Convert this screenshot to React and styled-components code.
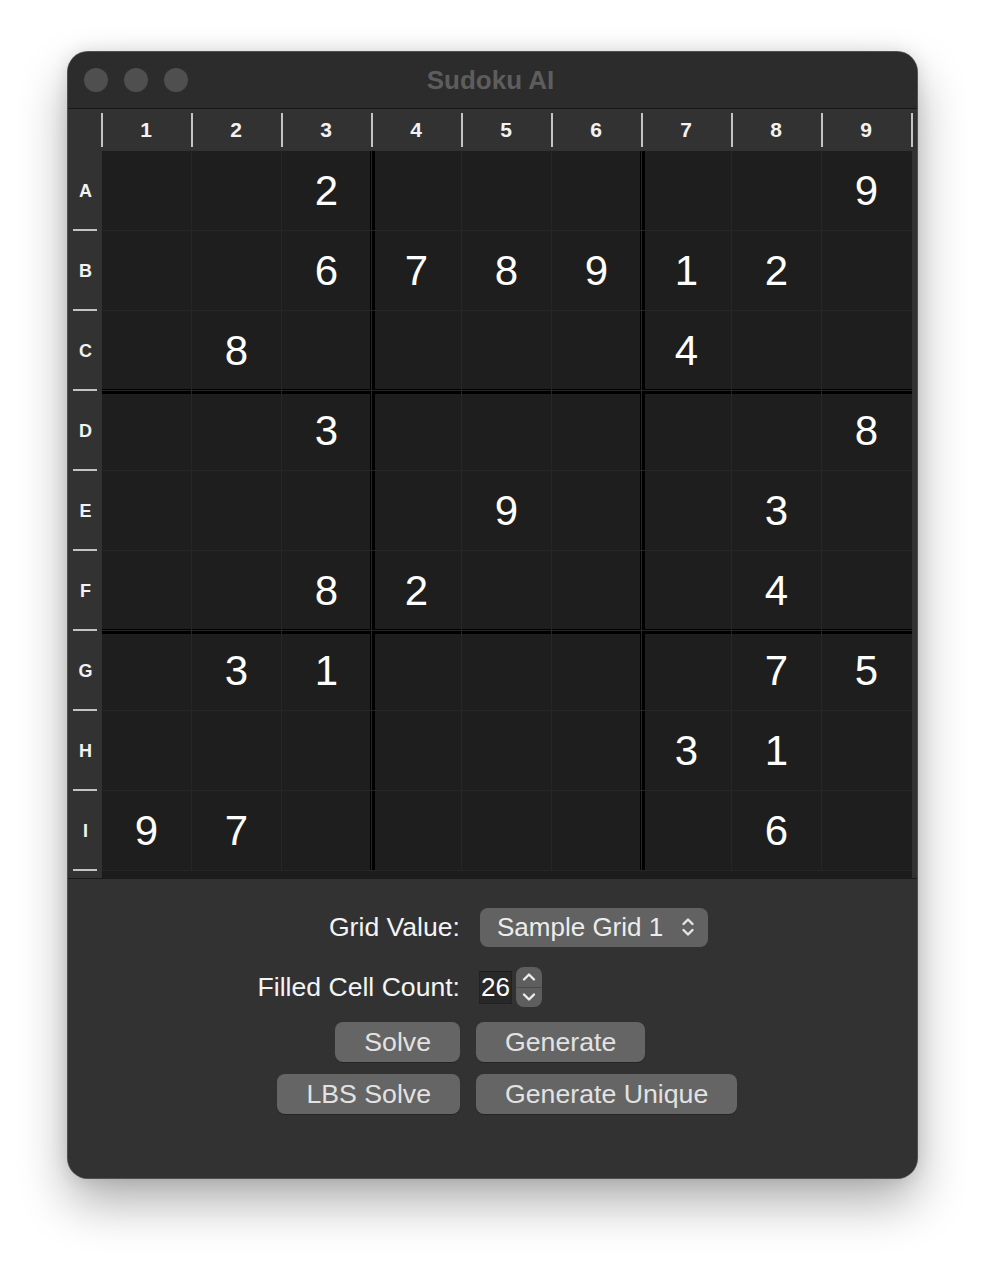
import React from "react";
import styled, { createGlobalStyle } from "styled-components";

const GlobalStyle = createGlobalStyle`
  html, body {
    margin: 0;
    padding: 0;
    background: #ffffff;
  }
  body {
    font-family: "Liberation Sans", Arial, sans-serif;
  }
`;

const FONT = `"Liberation Sans", Arial, sans-serif`;

// rows A..I, 0 = empty
const board = [
  [0, 0, 2, 0, 0, 0, 0, 0, 9],
  [0, 0, 6, 7, 8, 9, 1, 2, 0],
  [0, 8, 0, 0, 0, 0, 4, 0, 0],
  [0, 0, 3, 0, 0, 0, 0, 0, 8],
  [0, 0, 0, 0, 9, 0, 0, 3, 0],
  [0, 0, 8, 2, 0, 0, 0, 4, 0],
  [0, 3, 1, 0, 0, 0, 0, 7, 5],
  [0, 0, 0, 0, 0, 0, 3, 1, 0],
  [9, 7, 0, 0, 0, 0, 0, 6, 0],
];
const rowNames = ["A", "B", "C", "D", "E", "F", "G", "H", "I"];

const Page = styled.div`
  padding: 52px 0 84px 68px;
`;

const Window = styled.div`
  width: 849px;
  height: 1126px;
  border-radius: 20px;
  overflow: hidden;
  background: #323232;
  display: flex;
  flex-direction: column;
  box-shadow: 0 0 0 1px #515151, 0 24px 50px rgba(0, 0, 0, 0.32),
    0 0 18px rgba(0, 0, 0, 0.12);
`;

const TitleBar = styled.div`
  height: 56px;
  flex: none;
  background: #2c2c2c;
  border-bottom: 1px solid #181818;
  display: grid;
  grid-template-columns: 1fr auto 1fr;
  align-items: center;
  padding: 0 16px;
`;

const Lights = styled.div`
  display: flex;
  gap: 16px;
`;

const Light = styled.span`
  width: 24px;
  height: 24px;
  border-radius: 50%;
  background: #4f4f4f;
`;

const Title = styled.div`
  font-family: ${FONT};
  font-weight: 700;
  font-size: 26px;
  color: #5d5d5d;
  margin-left: -4px;
`;

const ColumnHeader = styled.div`
  height: 42px;
  flex: none;
  display: flex;
  padding-left: 33px;
  background: #323232;
`;

const ColLabel = styled.div`
  position: relative;
  width: 90px;
  display: flex;
  align-items: center;
  justify-content: center;
  font-family: ${FONT};
  font-weight: 700;
  font-size: 21px;
  color: #f2f2f2;

  &::before {
    content: "";
    position: absolute;
    left: 0;
    top: 4px;
    width: 2px;
    height: 34px;
    background: #c4c4c4;
  }
  ${(p) =>
    p.$last &&
    `
    &::after {
      content: "";
      position: absolute;
      right: -2px;
      top: 4px;
      width: 2px;
      height: 34px;
      background: #c4c4c4;
    }
  `}
`;

const Board = styled.div`
  flex: none;
  display: flex;
  border-bottom: 1px solid #1a1a1a;
`;

const RowLabels = styled.div`
  width: 34px;
  display: flex;
  flex-direction: column;
  padding-bottom: 7px;
`;

const RowLabel = styled.div`
  position: relative;
  height: 80px;
  display: flex;
  align-items: center;
  justify-content: center;
  font-family: ${FONT};
  font-weight: 700;
  font-size: 18px;
  color: #f2f2f2;
  padding-left: 1px;

  &::after {
    content: "";
    position: absolute;
    left: 5px;
    bottom: 0;
    width: 24px;
    height: 2px;
    background: #c4c4c4;
  }
`;

const GridWrap = styled.div`
  background: #1c1c1c;
  padding-bottom: 7px;
`;

const Grid = styled.div`
  display: grid;
  grid-template-columns: repeat(9, 90px);
  grid-template-rows: repeat(9, 80px);
`;

const cellShadow = ({ $r, $c }) => {
  const s = [];
  if ($c < 8) s.push("inset -1px 0 0 #262626");
  s.push("inset 0 -1px 0 #262626");
  if ($c === 2 || $c === 5) s.push("inset -2px 0 0 #000");
  if ($c === 3 || $c === 6) s.push("inset 3px 0 0 #000");
  if ($r === 2 || $r === 5) s.push("inset 0 -2px 0 #000");
  if ($r === 3 || $r === 6) s.push("inset 0 3px 0 #000");
  return s.join(", ");
};

const Cell = styled.div`
  background: #1e1e1e;
  box-shadow: ${cellShadow};
  display: flex;
  align-items: center;
  justify-content: center;
  font-family: ${FONT};
  font-size: 42px;
  color: #ffffff;
  padding-right: 1px;
`;

const Panel = styled.div`
  flex: 1;
  background: #323232;
  padding-top: 28px;
  display: flex;
  flex-direction: column;
`;

const FormRow = styled.div`
  display: grid;
  grid-template-columns: 392px 1fr;
  column-gap: ${(p) => p.$gap}px;
  align-items: center;
  margin-top: ${(p) => p.$top || 0}px;
  height: 40px;
`;

const Label = styled.div`
  justify-self: end;
  font-family: ${FONT};
  font-size: 26.6px;
  color: #f4f4f4;
`;

const PopUp = styled.div`
  justify-self: start;
  width: 228px;
  height: 39px;
  box-sizing: border-box;
  border-radius: 8px;
  background: #626262;
  display: flex;
  align-items: center;
  justify-content: space-between;
  padding: 0 12px 0 17px;
  font-family: ${FONT};
  font-size: 26px;
  color: #ececec;
`;

const NumberGroup = styled.div`
  display: flex;
  align-items: center;
  gap: 4px;
`;

const NumberField = styled.div`
  width: 33px;
  height: 33px;
  box-sizing: border-box;
  background: #282828;
  border: 1px solid #222;
  border-top-color: #1c1c1c;
  display: flex;
  align-items: center;
  font-family: ${FONT};
  font-size: 26px;
  color: #ffffff;
  padding-left: 1px;
`;

const Stepper = styled.div`
  width: 26px;
  height: 40px;
  border-radius: 8px;
  background: #5e5e5e;
  display: flex;
  flex-direction: column;
  overflow: hidden;
`;

const StepHalf = styled.div`
  flex: 1;
  display: flex;
  align-items: center;
  justify-content: center;
  border-top: ${(p) => (p.$lower ? "1px solid #4a4a4a" : "none")};
`;

const Button = styled.div`
  justify-self: ${(p) => (p.$left ? "end" : "start")};
  height: 40px;
  box-sizing: border-box;
  padding: 0 29px;
  border-radius: 8px;
  background: #656565;
  display: flex;
  align-items: center;
  font-family: ${FONT};
  font-size: 26.7px;
  color: #e2e2e2;
  box-shadow: 0 1px 0 rgba(0, 0, 0, 0.25);
`;

const UpDown = () => (
  <svg width="16" height="24" viewBox="0 0 16 24" fill="none">
    <path d="M3.5 9 L8 4.5 L12.5 9" stroke="#e6e6e6" strokeWidth="2.4" strokeLinecap="round" strokeLinejoin="round" />
    <path d="M3.5 15 L8 19.5 L12.5 15" stroke="#e6e6e6" strokeWidth="2.4" strokeLinecap="round" strokeLinejoin="round" />
  </svg>
);

const Chevron = ({ down }) => (
  <svg width="16" height="12" viewBox="0 0 16 12" fill="none">
    <path
      d={down ? "M3 3.5 L8 8.5 L13 3.5" : "M3 8.5 L8 3.5 L13 8.5"}
      stroke="#ececec"
      strokeWidth="2.4"
      strokeLinecap="round"
      strokeLinejoin="round"
    />
  </svg>
);

export default function App() {
  return (
    <Page>
      <GlobalStyle />
      <Window>
        <TitleBar>
          <Lights>
            <Light />
            <Light />
            <Light />
          </Lights>
          <Title>Sudoku AI</Title>
          <div />
        </TitleBar>

        <ColumnHeader>
          {[1, 2, 3, 4, 5, 6, 7, 8, 9].map((n) => (
            <ColLabel key={n} $last={n === 9}>
              {n}
            </ColLabel>
          ))}
        </ColumnHeader>

        <Board>
          <RowLabels>
            {rowNames.map((r) => (
              <RowLabel key={r}>{r}</RowLabel>
            ))}
          </RowLabels>
          <GridWrap>
            <Grid>
              {board.map((row, r) =>
                row.map((v, c) => (
                  <Cell key={r + "-" + c} $r={r} $c={c}>
                    {v ? v : ""}
                  </Cell>
                ))
              )}
            </Grid>
          </GridWrap>
        </Board>

        <Panel>
          <FormRow $gap={20}>
            <Label>Grid Value:</Label>
            <PopUp>
              <span>Sample Grid 1</span>
              <UpDown />
            </PopUp>
          </FormRow>
          <FormRow $gap={19} $top={20}>
            <Label>Filled Cell Count:</Label>
            <NumberGroup>
              <NumberField>26</NumberField>
              <Stepper>
                <StepHalf>
                  <Chevron />
                </StepHalf>
                <StepHalf $lower>
                  <Chevron down />
                </StepHalf>
              </Stepper>
            </NumberGroup>
          </FormRow>
          <FormRow $gap={16} $top={15}>
            <Button $left>Solve</Button>
            <Button>Generate</Button>
          </FormRow>
          <FormRow $gap={16} $top={12}>
            <Button $left>LBS Solve</Button>
            <Button>Generate Unique</Button>
          </FormRow>
        </Panel>
      </Window>
    </Page>
  );
}
